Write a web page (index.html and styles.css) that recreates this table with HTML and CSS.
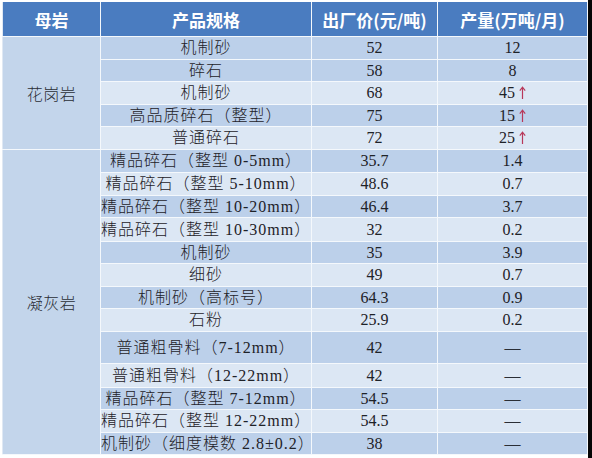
FILE: index.html
```html
<!DOCTYPE html>
<html lang="zh">
<head>
<meta charset="utf-8">
<title>母岩产品规格</title>
<link rel="stylesheet" href="styles.css">
</head>
<body>
<div class="page">
  <table class="tbl">
    <colgroup>
      <col class="c1"><col class="c2"><col class="c3"><col class="c4">
    </colgroup>
    <thead>
      <tr class="hd"><th>母岩</th><th>产品规格</th><th>出厂价(元/吨)</th><th>产量(万吨/月)</th></tr>
    </thead>
    <tbody>
      <tr class="m h23"><td class="rock" rowspan="5">花岗岩</td><td class="spec">机制砂</td><td>52</td><td>12</td></tr>
      <tr class="m h22"><td class="spec">碎石</td><td>58</td><td>8</td></tr>
      <tr class="l h23"><td class="spec">机制砂</td><td>68</td><td>45 <svg class="up" viewBox="0 0 7 13" width="7" height="13"><path d="M3.5 1.5V13M0.8 4.6L3.5 1.2L6.2 4.6" fill="none" stroke="#b8385a" stroke-width="1.2"/></svg></td></tr>
      <tr class="m h22"><td class="spec">高品质碎石（整型）</td><td>75</td><td>15 <svg class="up" viewBox="0 0 7 13" width="7" height="13"><path d="M3.5 1.5V13M0.8 4.6L3.5 1.2L6.2 4.6" fill="none" stroke="#b8385a" stroke-width="1.2"/></svg></td></tr>
      <tr class="l h23"><td class="spec">普通碎石</td><td>72</td><td>25 <svg class="up" viewBox="0 0 7 13" width="7" height="13"><path d="M3.5 1.5V13M0.8 4.6L3.5 1.2L6.2 4.6" fill="none" stroke="#b8385a" stroke-width="1.2"/></svg></td></tr>
      <tr class="m h23"><td class="rock" rowspan="13">凝灰岩</td><td class="spec">精品碎石（整型 0-5mm）</td><td>35.7</td><td>1.4</td></tr>
      <tr class="l h23"><td class="spec">精品碎石（整型 5-10mm）</td><td>48.6</td><td>0.7</td></tr>
      <tr class="m h22"><td class="spec">精品碎石（整型 10-20mm）</td><td>46.4</td><td>3.7</td></tr>
      <tr class="l h24"><td class="spec">精品碎石（整型 10-30mm）</td><td>32</td><td>0.2</td></tr>
      <tr class="m h22"><td class="spec">机制砂</td><td>35</td><td>3.9</td></tr>
      <tr class="l h23"><td class="spec">细砂</td><td>49</td><td>0.7</td></tr>
      <tr class="m h22"><td class="spec">机制砂（高标号）</td><td>64.3</td><td>0.9</td></tr>
      <tr class="l h23"><td class="spec">石粉</td><td>25.9</td><td>0.2</td></tr>
      <tr class="m h32"><td class="spec">普通粗骨料（7-12mm）</td><td>42</td><td class="dash">—</td></tr>
      <tr class="l h24"><td class="spec">普通粗骨料（12-22mm）</td><td>42</td><td class="dash">—</td></tr>
      <tr class="m h22"><td class="spec">精品碎石（整型 7-12mm）</td><td>54.5</td><td class="dash">—</td></tr>
      <tr class="l h23"><td class="spec">精品碎石（整型 12-22mm）</td><td>54.5</td><td class="dash">—</td></tr>
      <tr class="m h22"><td class="spec">机制砂（细度模数 2.8±0.2）</td><td>38</td><td class="dash">—</td></tr>
    </tbody>
  </table>
  <div class="edge"></div>
</div>
</body>
</html>
```

FILE: styles.css
```css
html, body {
  margin: 0;
  padding: 0;
  background: #ffffff;
}
.page {
  display: flex;
  justify-content: space-between;
  align-items: stretch;
  width: 592px;
  height: 458px;
  padding: 2px 0 0 2px;
  box-sizing: border-box;
}
.edge {
  width: 5px;
  background: #050505;
  margin-top: -2px;
}
.tbl {
  width: 585px;
  height: 453px;
  border-collapse: collapse;
  table-layout: fixed;
  font-family: "Liberation Serif", "Noto Sans CJK SC", serif;
  font-size: 16px;
  font-weight: 300;
  color: #1e2228;
  align-self: flex-start;
}
.c1 { width: 98px; }
.c2 { width: 211px; }
.c3 { width: 126px; }
.c4 { width: 150px; }
.tbl th, .tbl td {
  border: 1px solid #f4f8fc;
  padding: 0;
  text-align: center;
  vertical-align: middle;
  line-height: 1;
  white-space: nowrap;
}
.tbl th {
  background: #4a7cc0;
  color: #ffffff;
  font-family: "Noto Sans CJK SC", sans-serif;
  font-weight: 700;
  font-size: 17px;
  height: 34px;
  border-top: none;
}
.tbl th:first-child, .tbl td.rock { border-left: 1px solid #dfe8f3; }
.tbl td.spec {
  letter-spacing: 1px;
}
.tbl td.dash {
  color: #2a2e36;
}
.m td { background: #bcd0ea; }
.l td { background: #dce7f4; }
.tbl td.rock {
  background: #c3d5eb;
  font-family: "Noto Sans CJK SC", sans-serif;
  font-weight: 300;
  font-size: 16px;
  color: #2a2e36;
  letter-spacing: 0.5px;
}
.h22 { height: 22px; }
.h23 { height: 23px; }
.h24 { height: 24px; }
.h32 { height: 32px; }
.up {
  display: inline-block;
  vertical-align: -1px;
}
```
